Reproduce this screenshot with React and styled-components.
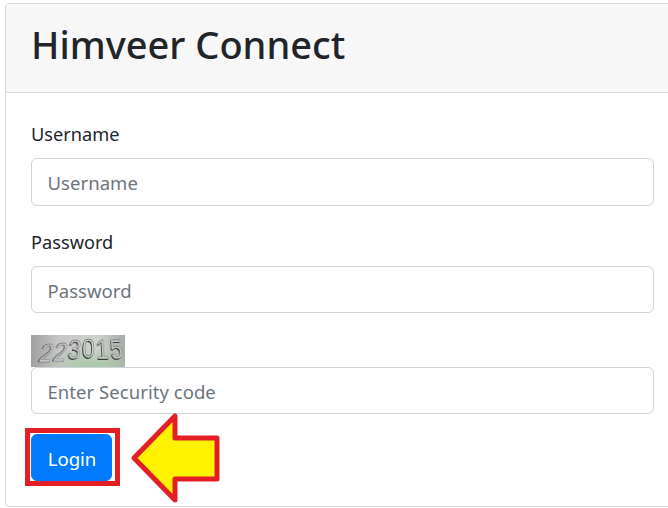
import styled, { createGlobalStyle } from "styled-components";

const GlobalStyle = createGlobalStyle`
  html, body {
    margin: 0;
    padding: 0;
    background: #fff;
    overflow: hidden;
  }
  body {
    width: 668px;
    height: 508px;
    font-family: "Noto Sans", "Open Sans", sans-serif;
    color: #212529;
  }
`;

const Page = styled.div`
  padding: 3px 0 0 5px;
`;

const Card = styled.div`
  width: 663px;
  height: 504px;
  box-sizing: border-box;
  border: 1px solid #d9d9d9;
  border-right: none;
  border-radius: 4px 0 0 4px;
`;

const CardHeader = styled.div`
  height: 89px;
  box-sizing: border-box;
  padding: 0 0 0 25px;
  display: flex;
  align-items: center;
  background: #f7f7f7;
  border-bottom: 1px solid #d9d9d9;
`;

const Title = styled.h1`
  margin: 0 0 6px;
  font-size: 38px;
  line-height: 1.2;
  font-weight: 500;
`;

const CardBody = styled.div`
  padding: 29px 0 0 25px;
  display: flex;
  flex-direction: column;
`;

const Field = styled.div`
  margin-bottom: ${(p) => p.$gap}px;
`;

const Label = styled.label`
  display: block;
  height: 24px;
  margin-bottom: 12px;
  font-size: 18.2px;
  line-height: 24px;
`;

const Input = styled.input`
  display: block;
  width: 623px;
  height: ${(p) => p.$h || 48}px;
  box-sizing: border-box;
  padding: ${(p) => (p.$h ? 2 : 0)}px 16px 0 15.5px;
  border: 1px solid #ced4da;
  border-radius: 6px;
  background: #fff;
  font-family: inherit;
  font-size: 18.5px;
  letter-spacing: 0.05px;
  color: #495057;
  &::placeholder {
    color: #6c757d;
    opacity: 1;
  }
`;

const Captcha = styled.div`
  width: 94px;
  height: 32px;
  display: flex;
  align-items: center;
  justify-content: center;
  padding-left: 6px;
  box-sizing: border-box;
  background: radial-gradient(ellipse 46px 20px at 64% 100%, #a6c8a4 0%, rgba(166, 200, 164, 0) 100%), linear-gradient(90deg, #a0a0a0 0%, #c6c6c6 30%, #cfd2ce 70%, #a8aca8 100%);
  overflow: hidden;
`;

const CaptchaDigit = styled.span`
  display: inline-block;
  font-family: "Liberation Sans", sans-serif;
  font-size: 27px;
  line-height: 1;
  color: #cfd1cf;
  -webkit-text-stroke: 0.35px #444844;
  text-shadow: -1px 0.5px 0.5px #2f322f;
  filter: blur(0.35px);
  transform: translateY(${(p) => p.$y}px) skewX(${(p) => p.$skew}deg) scaleX(0.86);
  margin-right: -1px;
`;

const ActionRow = styled.div`
  display: flex;
  align-items: flex-start;
  margin: 14px 0 0 -6px;
`;

const Highlight = styled.div`
  width: 95px;
  height: 58px;
  box-sizing: border-box;
  padding: 1px 3px 0 1px;
  border: 5px solid #e31e24;
`;

const LoginButton = styled.button`
  display: block;
  width: 81px;
  height: 47px;
  padding: 1px 0 0 1px;
  border: 1px solid #007bff;
  border-radius: 6px;
  background: #007bff;
  color: #fff;
  font-family: inherit;
  font-size: 18.6px;
`;

const Arrow = styled.svg`
  display: block;
  margin: -16px 0 0 9px;
`;

const digits = [
  { c: "2", y: 2, skew: -16 },
  { c: "2", y: 1, skew: -14 },
  { c: "3", y: -1, skew: -6 },
  { c: "0", y: -2, skew: 0 },
  { c: "1", y: -1, skew: 4 },
  { c: "5", y: -1, skew: 6 },
];

const App = () => {
  return (
    <Page>
      <GlobalStyle />
      <Card>
        <CardHeader>
          <Title>Himveer Connect</Title>
        </CardHeader>
        <CardBody>
          <Field $gap={24}>
            <Label>Username</Label>
            <Input placeholder="Username" />
          </Field>
          <Field $gap={22}>
            <Label>Password</Label>
            <Input $h={47} placeholder="Password" />
          </Field>
          <Captcha>
            {digits.map((d, i) => (
              <CaptchaDigit key={i} $y={d.y} $skew={d.skew}>
                {d.c}
              </CaptchaDigit>
            ))}
          </Captcha>
          <Input $h={47} placeholder="Enter Security code" />
          <ActionRow>
            <Highlight>
              <LoginButton>Login</LoginButton>
            </Highlight>
            <Arrow width="96" height="96" viewBox="0 0 96 96">
              <path
                d="M5 46 L46 4 L46 26 L88 26 L88 67 L46 67 L46 88 Z"
                fill="#fff200"
                stroke="#e31e24"
                strokeWidth="5"
                strokeLinejoin="round"
              />
            </Arrow>
          </ActionRow>
        </CardBody>
      </Card>
    </Page>
  );
};

export default App;
